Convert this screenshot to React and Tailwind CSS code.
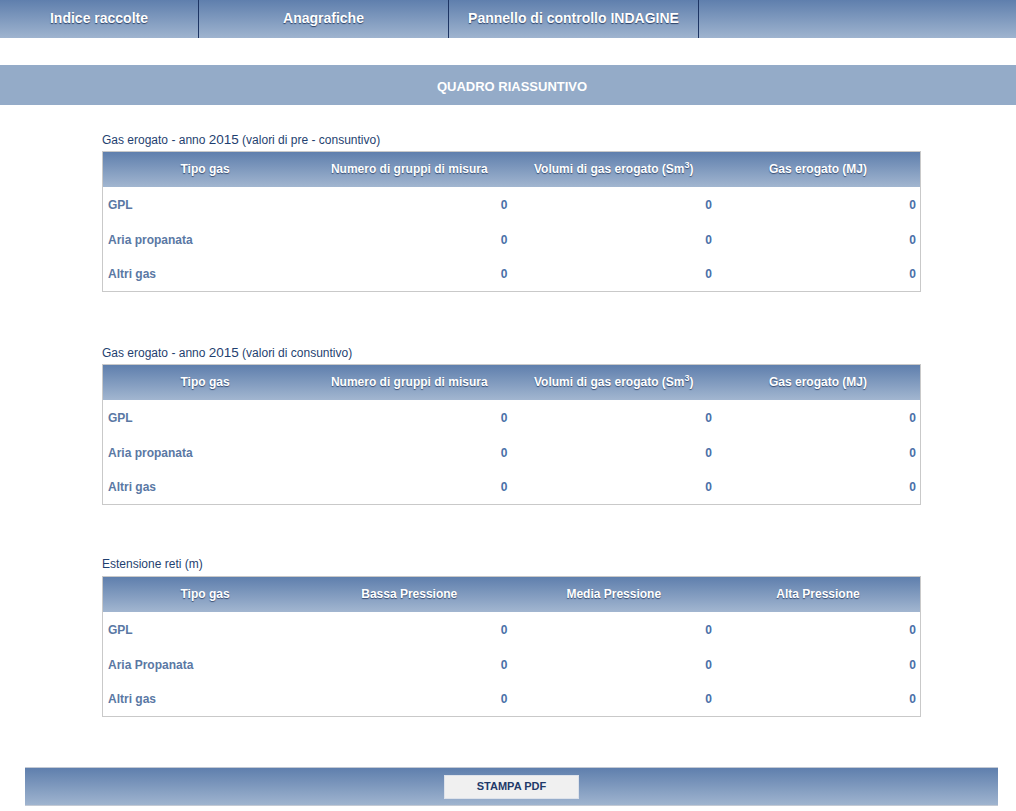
import React from "react";

const navItems = [
  { label: "Indice raccolte", w: "w-[199px]" },
  { label: "Anagrafiche", w: "w-[250px]" },
  { label: "Pannello di controllo INDAGINE", w: "w-[250px]" },
];

function Table({ headers, rows }) {
  return (
    <table className="w-[819px] table-fixed border-collapse border border-[#c9c9c9]">
      <thead>
        <tr className="h-[35px] bg-[linear-gradient(to_bottom,#5f7fad,#a2b6d0)]">
          {headers.map((h, i) => (
            <th
              key={i}
              className="text-center text-[12px] font-bold text-white [text-shadow:0_1px_1px_rgba(20,40,80,0.7)] align-middle pb-[1px]"
            >
              {h}
            </th>
          ))}
        </tr>
      </thead>
      <tbody>
        {rows.map((r, i) => (
          <tr key={i} className="h-[35px]">
            <td className="pl-[5px] pt-[1px] text-left text-[12px] font-bold text-[#5a78a4]">{r}</td>
            <td className="pr-[4px] pt-[1px] text-right text-[12px] font-bold text-[#4a70a8]">0</td>
            <td className="pr-[4px] pt-[1px] text-right text-[12px] font-bold text-[#4a70a8]">0</td>
            <td className="pr-[4px] pt-[1px] text-right text-[12px] font-bold text-[#4a70a8]">0</td>
          </tr>
        ))}
      </tbody>
    </table>
  );
}

const gasHeaders = [
  "Tipo gas",
  "Numero di gruppi di misura",
  <span key="v">
    Volumi di gas erogato (Sm<sup className="text-[9px]">3</sup>)
  </span>,
  "Gas erogato (MJ)",
];

export default function App() {
  return (
    <div className="w-[1016px] min-h-[811px] bg-white font-['Liberation_Sans',Arial,sans-serif]">
      <nav className="flex h-[38px] bg-[linear-gradient(to_bottom,#5f7fad,#9fb4cf)]">
        {navItems.map((n) => (
          <div
            key={n.label}
            className={`${n.w} flex items-center justify-center border-r border-[#1d3564] text-[14px] font-bold text-white [text-shadow:0_1px_1px_rgba(20,40,80,0.8)] pb-[2px]`}
          >
            {n.label}
          </div>
        ))}
      </nav>

      <div className="mt-[27px] flex h-[40px] items-center justify-center bg-[#94abc8] text-[13px] font-bold text-white pl-[8px] pt-[4px]">
        QUADRO RIASSUNTIVO
      </div>

      <div className="ml-[102px] mt-[27px]">
        <div className="mb-[4px] h-[15px] text-[12px] leading-[15px] text-[#1f3f70]">
          Gas erogato - anno <span className="text-[13.5px]">2015</span> (valori di pre - consuntivo)
        </div>
        <Table headers={gasHeaders} rows={["GPL", "Aria propanata", "Altri gas"]} />

        <div className="mt-[53px] mb-[4px] h-[15px] text-[12px] leading-[15px] text-[#1f3f70]">
          Gas erogato - anno <span className="text-[13.5px]">2015</span> (valori di consuntivo)
        </div>
        <Table headers={gasHeaders} rows={["GPL", "Aria propanata", "Altri gas"]} />

        <div className="mt-[52px] mb-[4px] h-[15px] text-[12px] leading-[15px] text-[#1f3f70]">
          Estensione reti (m)
        </div>
        <Table
          headers={["Tipo gas", "Bassa Pressione", "Media Pressione", "Alta Pressione"]}
          rows={["GPL", "Aria Propanata", "Altri gas"]}
        />
      </div>

      <div className="ml-[25px] mt-[50px] flex h-[39px] w-[973px] items-center justify-center border-y border-[#c4cad4] bg-[linear-gradient(to_bottom,#5f7fad,#9fb4cf)]">
        <button className="h-[24px] w-[135px] border border-[#dde2ea] bg-[#f0f0f0] text-[11px] font-bold text-[#1f3a6a]">
          STAMPA PDF
        </button>
      </div>
    </div>
  );
}
